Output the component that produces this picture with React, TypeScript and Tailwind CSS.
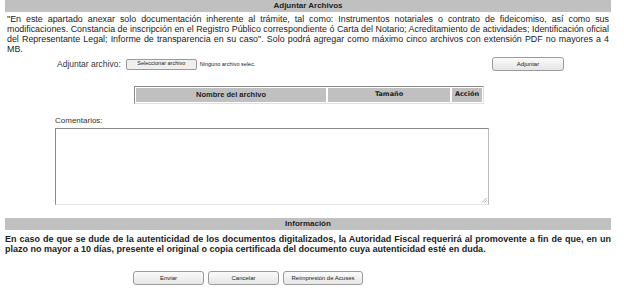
export default function App() {
  const btn =
    "h-[14px] rounded-[3px] border border-[#9a9a9a] bg-gradient-to-b from-[#fafafa] to-[#e6e6e6] text-[6px] text-[#222] leading-none";

  return (
    <div className="w-[624px] h-[292px] bg-white font-['Liberation_Sans',Arial,sans-serif] text-[#1a1a1a]">
      <div className="ml-[5px] w-[606px]">
        <div className="h-[12px] bg-[#c0c0c0] flex items-center justify-center text-[8px] font-bold text-[#222]">
          Adjuntar Archivos
        </div>
        <p className="px-[2px] pt-[2px] text-[8.9px] leading-[10px] text-justify text-[#222]">
          "En este apartado anexar solo documentación inherente al trámite, tal como: Instrumentos notariales o contrato de
          fideicomiso, así como sus modificaciones. Constancia de inscripción en el Registro Público correspondiente ó Carta del
          Notario; Acreditamiento de actividades; Identificación oficial del Representante Legal; Informe de transparencia en su
          caso". Solo podrá agregar como máximo cinco archivos con extensión PDF no mayores a 4 MB.
        </p>

        <div className="mt-[2px] flex items-center h-[16px]">
          <span className="ml-[52px] text-[8.5px] text-[#333]">Adjuntar archivo:</span>
          <button className="ml-[5px] w-[71px] h-[11px] rounded-[2px] border border-[#9a9a9a] bg-[#efefef] text-[5.5px] text-[#222] leading-none">
            Seleccionar archivo
          </button>
          <span className="ml-[3px] text-[5.5px] text-[#222]">Ninguno archivo selec.</span>
          <button className={`ml-auto mr-[47px] w-[72px] ${btn}`}>Adjuntar</button>
        </div>

        <div className="mt-[14px] ml-[129px] w-[350px] border border-[#8a8a8a] border-r-[#e0e0e0] border-b-[#e0e0e0] p-[1px]">
          <div className="flex h-[14px] gap-[2px] text-[7.5px] font-bold text-[#222]">
            <div className="w-[190px] bg-[#c0c0c0] flex items-center justify-center">Nombre del archivo</div>
            <div className="flex-1 bg-[#c0c0c0] flex items-center justify-center font-['DejaVu_Sans',sans-serif] text-[6.5px]">
              Tamaño
            </div>
            <div className="w-[30px] bg-[#c0c0c0] flex items-center justify-center font-['DejaVu_Sans',sans-serif] text-[6.5px]">
              Acción
            </div>
          </div>
        </div>

        <div className="mt-[11px] ml-[50px] text-[8px] text-[#333]">Comentarios:</div>
        <div className="relative ml-[50px] mt-[1px] w-[434px] h-[77px] border border-[#8a8a8a] border-b-[#e4e4e4] border-r-[#bdbdbd] bg-white">
          <svg className="absolute right-[1px] bottom-[1px]" width="6" height="6" viewBox="0 0 6 6">
            <path d="M5.5 1 L1 5.5 M5.5 3.5 L3.5 5.5" stroke="#999" strokeWidth="0.8" />
          </svg>
        </div>

        <div className="mt-[13px] h-[12px] bg-[#c0c0c0] flex items-center justify-center text-[8px] font-bold text-[#222]">
          Información
        </div>
        <p className="pt-[4px] text-[9px] leading-[10px] font-bold text-justify text-[#222]">
          En caso de que se dude de la autenticidad de los documentos digitalizados, la Autoridad Fiscal requerirá al promovente a
          fin de que, en un plazo no mayor a 10 días, presente el original o copia certificada del documento cuya autenticidad
          esté en duda.
        </p>

        <div className="mt-[17px] ml-[128px] flex gap-[4px]">
          <button className={`w-[71px] ${btn}`}>Enviar</button>
          <button className={`w-[71px] ${btn}`}>Cancelar</button>
          <button className={`w-[80px] ${btn}`}>Reimpresión de Acuses</button>
        </div>
      </div>
    </div>
  );
}
